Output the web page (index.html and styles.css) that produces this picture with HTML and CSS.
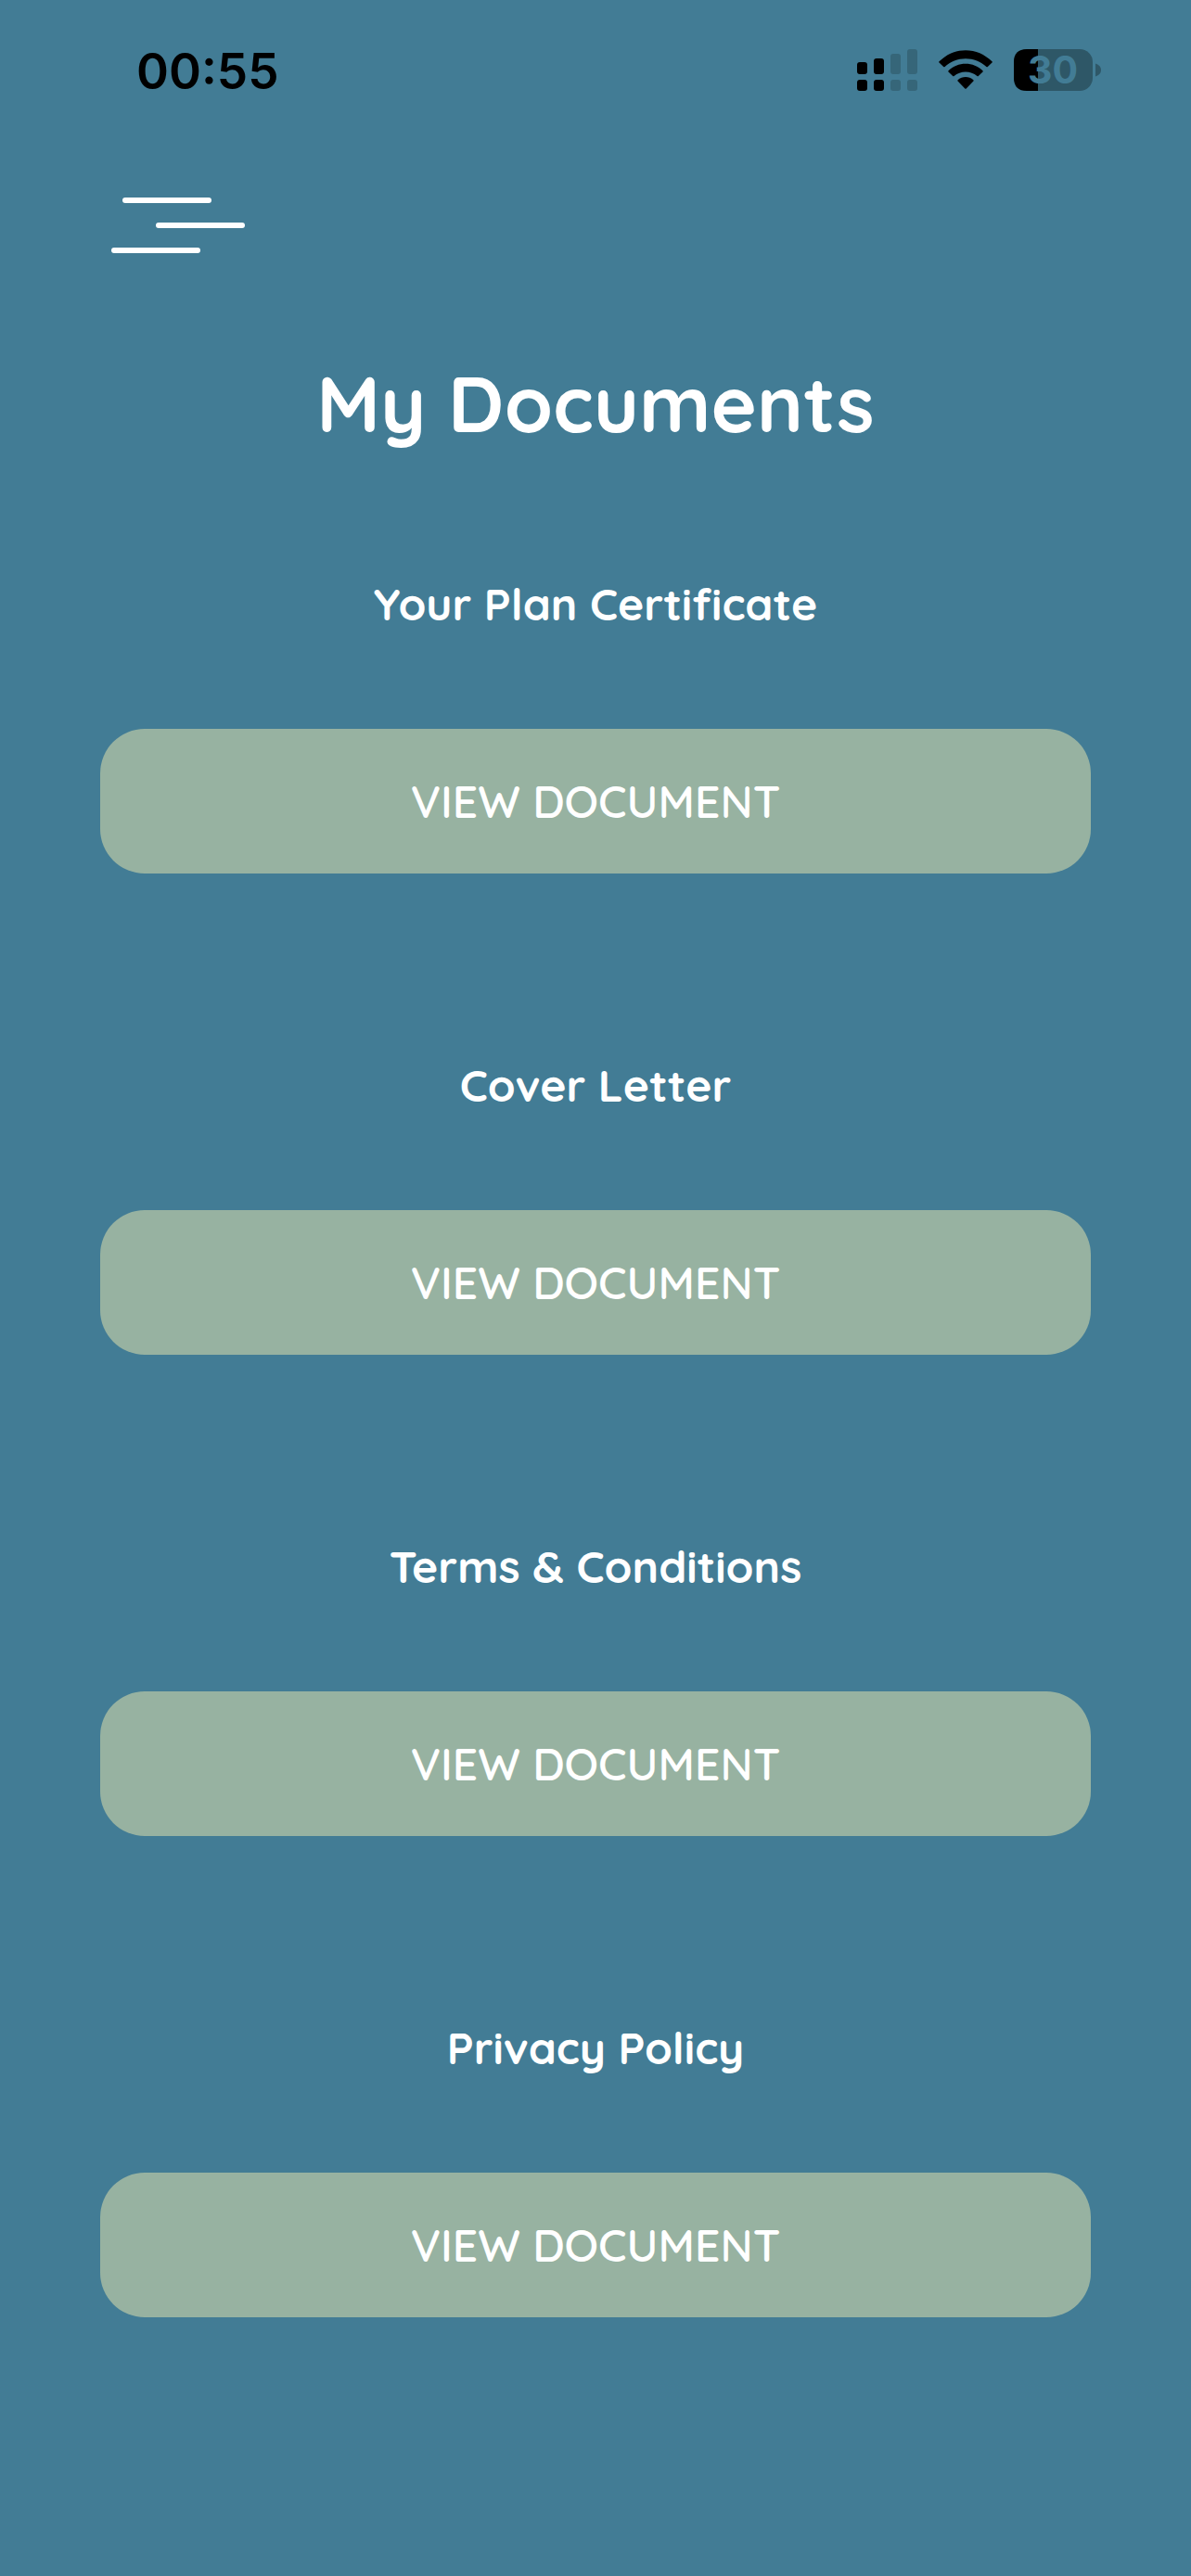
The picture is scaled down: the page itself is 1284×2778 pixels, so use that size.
FILE: index.html
```html
<!DOCTYPE html>
<html lang="en">

<head>
  <meta charset="UTF-8">
  <meta name="viewport" content="width=device-width, initial-scale=1.0">
  <title>My Documents</title>
  <link rel="stylesheet" href="styles.css">
</head>

<body>
  <div class="status-bar">
    <span class="time">00:55</span>
    <div class="status-icons">
      <!-- Signal -->
      <svg class="signal" width="65" height="45" viewBox="0 0 65 45" aria-hidden="true">
        <rect x="0" y="14" width="11" height="13" rx="3" />
        <rect x="18" y="10" width="11" height="17" rx="3" />
        <rect x="0" y="33" width="11" height="12" rx="3" />
        <rect x="18" y="33" width="11" height="12" rx="3" />
        <g class="faded">
          <rect x="36" y="5" width="11" height="22" rx="3" />
          <rect x="54" y="0" width="11" height="27" rx="3" />
          <rect x="36" y="33" width="11" height="12" rx="3" />
          <rect x="54" y="33" width="11" height="12" rx="3" />
        </g>
      </svg>
      <!-- Wifi -->
      <svg class="wifi" width="58" height="45" viewBox="0 0 58 45" aria-hidden="true">
        <path d="M.5 13.2C8.500 5.500 18.200 1.200 29 1.200S49.500 5.500 57.500 13.200Q58.100 13.900 57.500 14.600L52.800 19.100Q52.100 19.600 51.400 19C45.200 13.200 37.600 10.200 29 10.200S12.800 13.200 6.600 19Q5.900 19.600 5.200 19.100L.5 14.600Q-.1 13.900 .5 13.200Z" />
        <path d="M10.500 23.200C15.600 18.400 22 15.800 29 15.800S42.400 18.400 47.500 23.200Q48.100 23.900 47.500 24.600L42.800 29.100Q42.100 29.600 41.400 29C37.900 26 33.700 24.400 29 24.400S20.100 26 16.600 29Q15.900 29.600 15.200 29.100L10.500 24.600Q9.900 23.900 10.500 23.200Z" />
        <path d="M20.600 33.200C23 31 26 30 29 30S35 31 37.400 33.200Q38.100 33.900 37.400 34.600L29.700 42.400Q29 43.100 28.300 42.400L20.600 34.600Q19.900 33.900 20.600 33.200Z" />
      </svg>
      <!-- Battery -->
      <svg class="battery" width="94" height="45" viewBox="0 0 94 45" role="img" aria-label="Battery 30%">
        <rect class="battery-body" x="0" y="0" width="85" height="45" rx="14" />
        <path d="M26 0H14Q0 0 0 14V31Q0 45 14 45H26Z" />
        <path class="battery-body" d="M88 15.500Q94 17.500 94 22.500T88 29.500Z" />
        <text class="battery-text" x="42" y="37" text-anchor="middle">30</text>
      </svg>
    </div>
  </div>

  <header class="header">
    <button class="menu-button" type="button" aria-label="Menu">
      <span class="line line-top"></span>
      <span class="line line-middle"></span>
      <span class="line line-bottom"></span>
    </button>
  </header>

  <main class="container">
    <h1>My Documents</h1>

    <section class="document">
      <h2>Your Plan Certificate</h2>
      <button class="button" type="button">VIEW DOCUMENT</button>
    </section>

    <section class="document">
      <h2>Cover Letter</h2>
      <button class="button" type="button">VIEW DOCUMENT</button>
    </section>

    <section class="document">
      <h2>Terms &amp; Conditions</h2>
      <button class="button" type="button">VIEW DOCUMENT</button>
    </section>

    <section class="document">
      <h2>Privacy Policy</h2>
      <button class="button" type="button">VIEW DOCUMENT</button>
    </section>
  </main>
</body>

</html>
```

FILE: styles.css
```css
body {
  font-family: Quicksand, Lato, sans-serif;
  background-color: #427c95;
  color: #ffffff;
  margin: 0;
  min-height: 100vh;
}

/* Status bar */
.status-bar {
  display: flex;
  justify-content: space-between;
  align-items: center;
  height: 151px;
  padding: 0 97px 0 147px;
}

.time {
  padding-top: 2px;
  font-family: Inter, sans-serif;
  font-size: 53px;
  font-weight: 600;
  color: #000000;
}

.status-icons {
  display: flex;
  align-items: center;
  gap: 23px;
}

.faded {
  fill: #366679;
}

.battery {
  overflow: visible;
}

.battery-body {
  fill: #2e5767;
}

.battery-text {
  font-family: Inter, sans-serif;
  font-size: 41px;
  font-weight: 700;
  fill: #427c95;
}

/* Menu button */
.header {
  padding: 62px 120px 0;
}

.menu-button {
  display: flex;
  flex-direction: column;
  gap: 21px;
  width: 144px;
  padding: 0;
  border: none;
  background: none;
  cursor: pointer;
}

.line {
  width: 96px;
  height: 6px;
  border-radius: 3px;
  background-color: #ffffff;
}

.line-top {
  margin-left: 12px;
}

.line-middle {
  align-self: flex-end;
}

/* Documents */
.container {
  padding: 108px 108px 0;
  text-align: center;
}

h1 {
  margin: 0 0 129px;
  font-size: 84px;
  line-height: 108px;
  font-weight: 700;
}

.document {
  margin-bottom: 195px;
}

h2 {
  margin: 0 0 102px;
  font-size: 48px;
  line-height: 66px;
  font-weight: 700;
}

.button {
  display: block;
  width: 100%;
  height: 156px;
  border: none;
  border-radius: 48px;
  background-color: #97b2a1;
  color: #ffffff;
  font-family: inherit;
  font-size: 48px;
  font-weight: 600;
  cursor: pointer;
}
```
